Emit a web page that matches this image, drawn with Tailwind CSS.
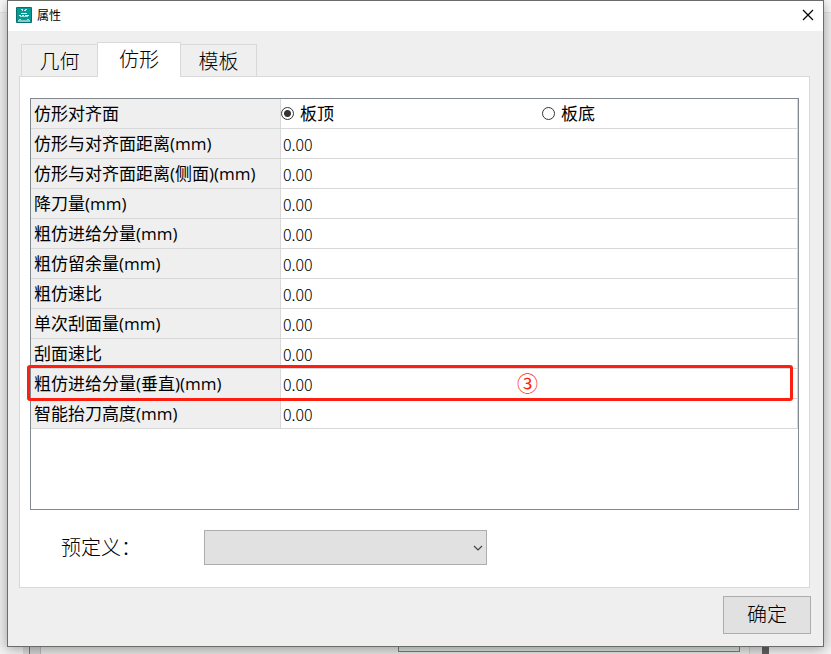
<!DOCTYPE html>
<html lang="zh-CN">
  <head>
    <meta charset="UTF-8" />
    <meta name="viewport" content="width=device-width, initial-scale=1.0" />
    <title>属性</title>
    <script src="https://cdn.jsdelivr.net/npm/@tailwindcss/browser@4"></script>
  </head>
  <body
    class="flex min-h-screen flex-col overflow-x-hidden bg-[#f0f0f0] bg-[linear-gradient(#fafafa_12px,#e4e4e4_12px,#e4e4e4_13px,#f0f0f0_13px)] font-['Open_Sans','Noto_Sans_CJK_SC',sans-serif] text-black"
  >
    <!-- Ventana -->
    <main
      class="relative z-10 mr-[7px] ml-[7px] flex flex-1 flex-col border border-[#6b6d6b] bg-[#efefef] shadow-[0_2px_12px_rgba(0,0,0,0.35)]"
    >
      <header class="flex h-[30px] items-center bg-white pr-[7px] pb-0.5 pl-2">
        <svg class="h-4 w-4" viewBox="0 0 16 16" aria-hidden="true">
          <rect width="16" height="16" rx="1" fill="#07706c" />
          <rect x="1" y="1" width="14" height="14" fill="#079a94" />
          <path d="M5 2.5h2M9 2.5h2M6 3.5h1M8 3.5h2" stroke="#c5eae8" />
          <path d="M5 6.5h6M3 8.5h2M6 8.5h2M9 8.5h4" stroke="#fff" />
          <path d="M4 9.5h8" stroke="#9fdcd9" />
          <path d="M3 12.5h2M11 12.5h2" stroke="#9fdcd9" />
          <path d="M2 14h12" stroke="#fff" />
        </svg>
        <h1 class="ml-[5px] pt-0.5 text-[12px] leading-4">属性</h1>
        <button type="button" aria-label="关闭" class="ml-auto">
          <svg class="h-4 w-4" viewBox="0 0 16 16" fill="none" stroke="#000">
            <path d="M3 3l10 10M13 3L3 13" stroke-width="1.2" />
          </svg>
        </button>
      </header>

      <!-- Pestañas -->
      <div
        role="tablist"
        class="mt-[11px] ml-[13px] flex items-end text-[20px] leading-6 font-light"
      >
        <button
          type="button"
          role="tab"
          aria-selected="false"
          class="h-[32px] w-[77px] border border-b-0 border-[#d9d9d9] pt-0.5"
        >
          几何
        </button>
        <button
          type="button"
          role="tab"
          aria-selected="true"
          class="relative z-10 -mb-px -ml-px h-[35px] w-[84px] border border-b-0 border-[#d9d9d9] bg-white"
        >
          仿形
        </button>
        <button
          type="button"
          role="tab"
          aria-selected="false"
          class="-ml-px h-[32px] w-[77px] border border-b-0 border-[#d9d9d9] pt-0.5"
        >
          模板
        </button>
      </div>

      <!-- Panel -->
      <section
        role="tabpanel"
        class="mr-[13px] ml-[11px] flex flex-1 flex-col border border-[#d9d9d9] bg-white px-[10px] pt-[21px]"
      >
        <div class="min-h-[412px] border border-[#828790]">
          <table
            class="w-full table-fixed border-separate border-spacing-0 text-[17px] leading-6"
          >
            <colgroup>
              <col class="w-[250px]" />
              <col />
            </colgroup>
            <tbody id="filas">
              <tr class="h-[30px]">
                <th
                  scope="row"
                  class="border-r border-b border-[#d8d8d8] bg-[#efefef] pl-[3px] text-left font-normal"
                >
                  仿形对齐面
                </th>
                <td class="border-r border-b border-[#d8d8d8]">
                  <div class="grid grid-cols-2 gap-1.5">
                    <label class="flex items-center gap-1.5">
                      <input
                        type="radio"
                        name="cara"
                        checked
                        class="h-[13px] w-[13px] appearance-none rounded-full border border-[#333] bg-white checked:bg-[radial-gradient(circle,#333_3px,transparent_4px)]"
                      />
                      板顶
                    </label>
                    <label class="flex items-center gap-1.5">
                      <input
                        type="radio"
                        name="cara"
                        class="h-[13px] w-[13px] appearance-none rounded-full border border-[#333] bg-white checked:bg-[radial-gradient(circle,#333_3px,transparent_4px)]"
                      />
                      板底
                    </label>
                  </div>
                </td>
              </tr>
            </tbody>
          </table>
        </div>

        <div class="mt-5 mb-[22px] flex items-center pl-[31px]">
          <label
            for="predefinido"
            class="w-[143px] text-[20px] leading-6 font-light"
            >预定义：</label
          >
          <div class="relative">
            <select
              id="predefinido"
              class="block h-[35px] w-[283px] appearance-none border border-[#adadad] bg-[#e1e1e1]"
            >
              <option></option>
            </select>
            <svg
              class="pointer-events-none absolute top-[13px] right-1 h-2.5 w-2.5"
              viewBox="0 0 10 10"
              fill="none"
              stroke="#444"
            >
              <path d="M1 3l4 4 4-4" stroke-width="1.2" />
            </svg>
          </div>
        </div>
      </section>

      <footer class="mt-2 mr-3 mb-3 flex justify-end">
        <button
          type="button"
          class="h-[38px] w-[88px] border border-[#adadad] bg-[#e1e1e1] text-[20px] leading-6 font-light"
        >
          确定
        </button>
      </footer>
    </main>

    <!-- Borde de la ventana de atrás -->
    <div class="flex h-2 bg-[#f3f3f3] pl-[23px]">
      <div class="w-[18px] border-r border-l-[6px] border-r-[#b8b8b8] border-l-[#dcdcdc] bg-[#d4d4d4]">
        <div class="h-full border-l border-[#777]"></div>
      </div>
      <div class="flex flex-1 items-start justify-end bg-[#e6e8e6] pr-[9px]">
        <div class="h-[5px] w-[342px] border border-t-0 border-[#7a7d7a] bg-[#dde2dd]"></div>
      </div>
      <div class="w-[13px] border-l border-[#ccc] bg-[#e2e2e2]"></div>
      <div class="mr-[62px] w-[7px] bg-[#606060]"></div>
    </div>

    <script>
      const filas = [
        "仿形与对齐面距离(mm)",
        "仿形与对齐面距离(侧面)(mm)",
        "降刀量(mm)",
        "粗仿进给分量(mm)",
        "粗仿留余量(mm)",
        "粗仿速比",
        "单次刮面量(mm)",
        "刮面速比",
        "粗仿进给分量(垂直)(mm)",
        "智能抬刀高度(mm)",
      ];
      // fila marcada con el recuadro rojo
      const marcada = 8;
      const cuerpo = document.getElementById("filas");

      filas.forEach((nombre, i) => {
        const tr = document.createElement("tr");
        tr.className = i === marcada ? "relative z-10 h-[30px]" : "h-[30px]";
        tr.innerHTML = `
          <th scope="row" class="border-r border-b border-[#d8d8d8] bg-[#efefef] pl-[3px] text-left font-normal">
            <label for="valor${i}">${nombre}</label>
          </th>
          <td class="border-r border-b border-[#d8d8d8]">
            <input id="valor${i}" type="text" value="0.00" class="block h-6 w-full pl-0.5 font-['Noto_Sans_CJK_SC',sans-serif] text-[16px] leading-6 font-light outline-none" />
            ${
              i === marcada
                ? `<span class="pointer-events-none absolute -top-1 right-[5px] -bottom-0.5 -left-1 rounded-[3px] border-3 border-[#ff1f10]"></span>
                   <span class="pointer-events-none absolute top-px left-[486px] font-['Noto_Sans_CJK_SC',sans-serif] text-[21px] leading-6 text-[#ff1f10]">③</span>`
                : ""
            }
          </td>
        `;
        cuerpo.appendChild(tr);
      });
    </script>
  </body>
</html>
